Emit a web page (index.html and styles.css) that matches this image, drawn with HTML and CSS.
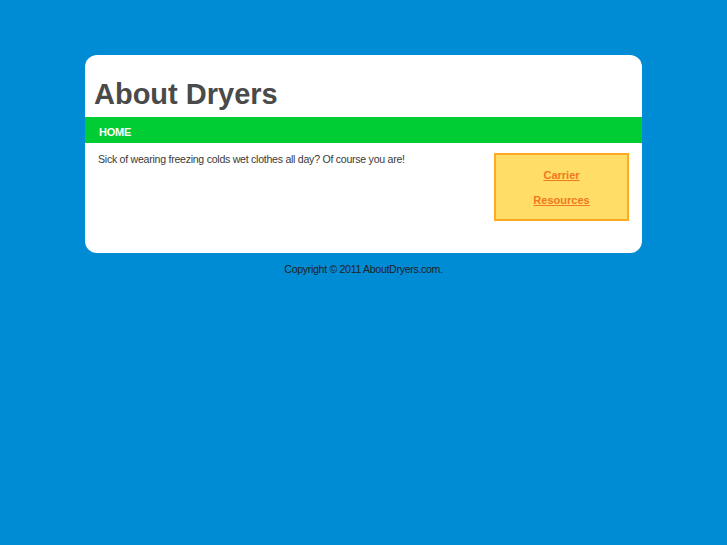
FILE: index.html
```html
<!DOCTYPE html>
<html>
<head>
<meta charset="utf-8">
<link rel="stylesheet" href="styles.css">
</head>
<body>
<div class="page">
  <div class="header"><h1 class="title">About Dryers</h1></div>
  <div class="nav"><a class="nav-link" href="#">HOME</a></div>
  <div class="content">
    <p class="intro">Sick of wearing freezing colds wet clothes all day? Of course you are!</p>
    <div class="sidebar">
      <a class="side-link" href="#">Carrier</a>
      <a class="side-link" href="#">Resources</a>
    </div>
  </div>
</div>
<p class="footer">Copyright © 2011 AboutDryers.com.</p>
</body>
</html>
```
FILE: styles.css
```css
html, body {
  margin: 0;
  padding: 0;
  background: #008bd5;
  font-family: "Liberation Sans", Arial, sans-serif;
}
.page {
  width: 557px;
  margin: 55px auto 0;
  background: #fff;
  border-radius: 12px;
  overflow: hidden;
}
.header {
  height: 62px;
  display: flex;
  align-items: flex-end;
}
.title {
  margin: 0 0 6px 9px;
  font-size: 29px;
  font-weight: bold;
  color: #4a4a4a;
  line-height: 34px;
}
.nav {
  height: 26px;
  background: #00cc33;
  display: flex;
  align-items: center;
  padding-left: 14px;
  padding-top: 4px;
  box-sizing: border-box;
}
.nav-link {
  color: #fff;
  font-weight: bold;
  font-size: 11px;
  letter-spacing: -0.2px;
  text-decoration: none;
}
.content {
  height: 110px;
  display: flex;
  justify-content: space-between;
  align-items: flex-start;
  padding: 10px 13px 0 13px;
  box-sizing: border-box;
}
.intro {
  margin: 0;
  font-size: 10.6px;
  letter-spacing: -0.27px;
  color: #3a3a3a;
  line-height: 13px;
}
.sidebar {
  width: 131px;
  height: 63px;
  padding-top: 1px;
  background: #ffdd66;
  border: 2px solid #ffaa22;
  display: flex;
  flex-direction: column;
  align-items: center;
  justify-content: center;
  gap: 12px;
}
.side-link {
  color: #f07820;
  font-weight: bold;
  font-size: 11px;
  line-height: 13px;
}
.footer {
  margin: 10px 0 0;
  text-align: center;
  font-size: 10.6px;
  letter-spacing: -0.32px;
  color: #222;
  line-height: 13px;
}
```
